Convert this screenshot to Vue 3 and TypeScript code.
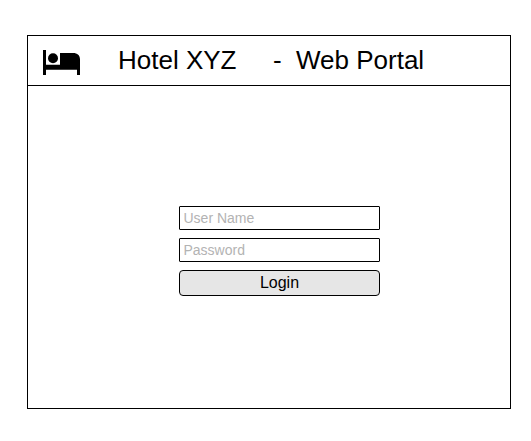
<script setup lang="ts">
import { ref } from 'vue'

const userName = ref<string>('')
const password = ref<string>('')
</script>

<template>
  <main class="portal">
    <header class="bar">
      <svg class="bed" viewBox="0 0 37 25" aria-hidden="true">
        <path d="M0 0h3v14.700h14V3h13c4.500 0 7 2.300 7 6.500V25h-3v-5.200H3V25H0z" />
        <circle cx="10" cy="8.300" r="5" />
      </svg>
      <h1 class="title"><span class="name">Hotel XYZ</span><span class="dash">-</span><span>Web Portal</span></h1>
    </header>
    <form class="login" @submit.prevent>
      <input v-model="userName" class="field" type="text" placeholder="User Name" />
      <input v-model="password" class="field" type="password" placeholder="Password" />
      <button class="submit" type="submit">Login</button>
    </form>
  </main>
</template>

<style>
body {
  background: #fff;
}
</style>

<style scoped>
.portal {
  box-sizing: border-box;
  width: 484px;
  height: 374px;
  margin: 35px 0 0 27px;
  border: 1px solid #000;
  display: flex;
  flex-direction: column;
  font-family: "Liberation Sans", Arial, sans-serif;
  color: #000;
}
.bar {
  box-sizing: border-box;
  height: 50px;
  border-bottom: 1px solid #000;
  padding-left: 15px;
  display: flex;
  align-items: flex-start;
}
.bed {
  width: 37px;
  height: 25px;
  margin-top: 14px;
}
.title {
  margin: 9px 0 0 38px;
  display: flex;
  font-size: 26px;
  line-height: 30px;
  font-weight: 400;
  white-space: nowrap;
}
.name {
  width: 155px;
}
.dash {
  width: 23px;
}
.login {
  width: 201px;
  margin: 120px 0 0 151px;
  display: flex;
  flex-direction: column;
  gap: 8px;
}
.field,
.submit {
  box-sizing: border-box;
  width: 100%;
  border: 1px solid #000;
  margin: 0;
  font-family: inherit;
}
.field {
  height: 24px;
  padding: 0 3.5px;
  border-radius: 1px;
  background: #fff;
  font-size: 14px;
  outline: none;
}
.field::placeholder {
  color: #b3b3b3;
  opacity: 1;
}
.submit {
  height: 26px;
  padding: 0;
  border-radius: 4px;
  background: #e6e6e6;
  color: #000;
  font-size: 16px;
}
</style>
